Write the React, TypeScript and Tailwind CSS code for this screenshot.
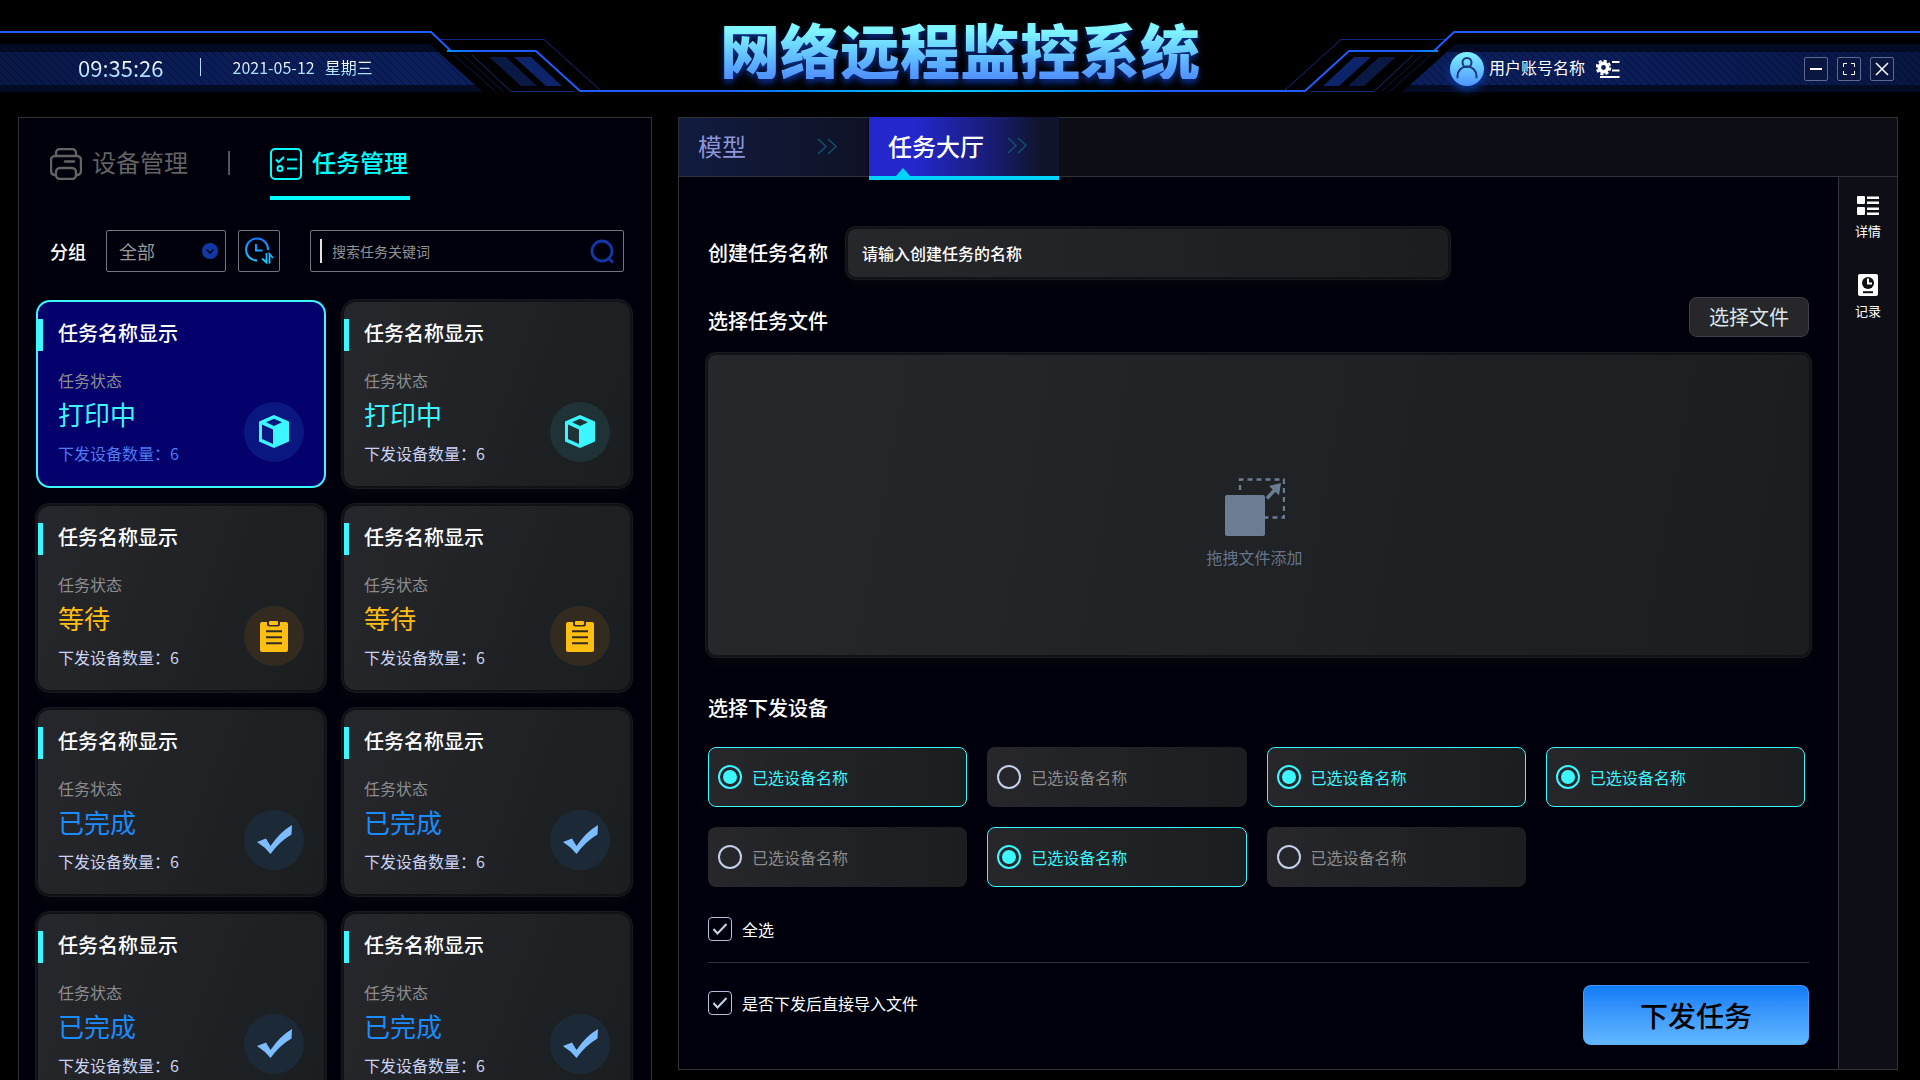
import { useState } from 'react'

type Status = 'printing' | 'waiting' | 'done'

const STATUS_LABEL: Record<Status, string> = {
  printing: '打印中',
  waiting: '等待',
  done: '已完成',
}

const STATUS_TEXT: Record<Status, string> = {
  printing: 'text-[#3cf7ff]',
  waiting: 'text-[#ffbe12]',
  done: 'text-[#1b8cff]',
}

const TASKS: { id: number; status: Status; count: number }[] = [
  { id: 1, status: 'printing', count: 6 },
  { id: 2, status: 'printing', count: 6 },
  { id: 3, status: 'waiting', count: 6 },
  { id: 4, status: 'waiting', count: 6 },
  { id: 5, status: 'done', count: 6 },
  { id: 6, status: 'done', count: 6 },
  { id: 7, status: 'done', count: 6 },
  { id: 8, status: 'done', count: 6 },
]

const PANEL_SHADOW =
  'shadow-[0_0_0_2px_#111215,0_0_0_3px_#191921,0_8px_10px_rgba(10,12,14,0.6)]'

/* HEADER */

function HeaderWing({ mirrored }: { mirrored?: boolean }) {
  const id = mirrored ? 'right' : 'left'
  return (
    <svg
      width={mirrored ? 655 : 620}
      height="93"
      viewBox={mirrored ? '0 0 655 93' : '0 0 620 93'}
      fill="none"
      className={mirrored ? 'absolute top-0 right-0' : 'absolute top-0 left-0'}
      aria-hidden="true"
    >
      <defs>
        <pattern
          id={`hatch-${id}`}
          width="8"
          height="8"
          patternUnits="userSpaceOnUse"
        >
          <path
            d={mirrored ? 'M-2 2L2-2M0 8L8 0M6 10L10 6' : 'M-2 6L2 10M0 0L8 8M6-2L10 2'}
            stroke="#01040f"
            strokeOpacity="0.45"
          />
        </pattern>
        <linearGradient id={`bar-${id}`} x1="-35" x2="483" y1="0" y2="0" gradientUnits="userSpaceOnUse">
          <stop stopColor="#081642" />
          <stop offset="0.4" stopColor="#0a1c56" />
          <stop offset="1" stopColor="#0b1f5c" />
        </linearGradient>
        <linearGradient id={`glint-${id}`} x1="447" x2="480" y1="0" y2="0" gradientUnits="userSpaceOnUse">
          <stop stopColor="#0090ff" />
          <stop offset="1" stopColor="#1f5bff" />
        </linearGradient>
      </defs>
      <g transform={mirrored ? 'translate(620 0) scale(-1 1)' : undefined}>
        <path d="M-35 44H430L483 92H-35Z" fill="#040b24" />
        <path d="M-35 52H438L475 85H-35Z" fill={`url(#bar-${id})`} />
        <path d="M-35 44H430L483 92H-35Z" fill={`url(#hatch-${id})`} />
        <path d="M440 39.500H544L600 90" stroke="#102a80" />
        <path d="M454 55L495 91M463 55L503 91" stroke="#0a1a4a" />
        <path d="M472 55L511 91.500H574" stroke="#14307f" />
        <path d="M489 57H506L537 86H521Z" fill="#0a1844" />
        <path d="M514 57H531L562 86H546Z" fill="#0d246a" />
        <path d="M-35 32H431L451 51H536L580 91H620" stroke="#1f5bff" strokeWidth="2" />
        <path d="M447 51H480" stroke={`url(#glint-${id})`} strokeWidth="2" />
      </g>
    </svg>
  )
}

function AvatarIcon() {
  return (
    <svg width="34" height="34" viewBox="0 0 34 34" fill="none" className="drop-shadow-[0_4px_4px_#0b3a9c]" aria-hidden="true">
      <defs>
        <linearGradient id="avatar" x1="0" x2="0" y1="0" y2="34" gradientUnits="userSpaceOnUse">
          <stop stopColor="#7df3ff" />
          <stop offset="1" stopColor="#4f93ff" />
        </linearGradient>
      </defs>
      <circle cx="17" cy="17" r="17" fill="url(#avatar)" />
      <circle cx="17" cy="10.500" r="4.500" stroke="#17397c" strokeWidth="2" />
      <path d="M7.500 25.500V24a9.500 9.500 0 0 1 19 0v1.500" stroke="#17397c" strokeWidth="2" strokeLinecap="round" />
    </svg>
  )
}

function AccountSettingsIcon() {
  return (
    <svg width="24" height="20" viewBox="0 0 24 20" fill="none" stroke="#fff" aria-hidden="true">
      <circle cx="7.500" cy="8.500" r="4.200" strokeWidth="3.600" />
      <circle cx="7.500" cy="8.500" r="6.800" strokeWidth="2" strokeDasharray="3.200 2.140" />
      <path d="M16 3h7.500M16 11.500h7.500M4 18h19.500" strokeWidth="2" />
    </svg>
  )
}

const windowButton =
  'flex size-6 items-center justify-center rounded-xs border border-[#5c6a92] bg-[#0a1540]'

function Header() {
  return (
    <header className="relative grid h-[93px] shrink-0 grid-cols-[1fr_auto_1fr] items-start">
      <HeaderWing />
      <HeaderWing mirrored />
      <div className="absolute top-[90px] right-[655px] left-[620px] h-0.5 bg-linear-to-r from-[#1f5bff] from-15% via-[#00d0ff] via-50% to-[#1f5bff] to-85%" />

      <div className="relative mt-[50px] flex h-[34px] items-center pl-[78px]">
        <time className="bg-linear-to-b from-white from-30% to-[#7fd0ff] bg-clip-text text-[22px] leading-[34px] text-transparent">
          09:35:26
        </time>
        <span className="ml-9 h-[18px] w-px bg-[#b5dcff]" />
        <p className="ml-8 flex gap-[10px] bg-linear-to-b from-white from-30% to-[#7fd0ff] bg-clip-text text-base text-transparent">
          <span>2021-05-12</span>
          <span>星期三</span>
        </p>
      </div>

      <h1 className="relative mt-[19px] bg-linear-to-b from-[#7ff6ff] from-20% to-[#5294ff] to-95% bg-clip-text text-[60px] leading-[60px] font-black text-transparent drop-shadow-[0_4px_3px_#0a2f8f]">
        网络远程监控系统
      </h1>

      <div className="relative mt-[52px] flex h-[34px] items-center justify-end gap-[184px] pr-[26px]">
        <button type="button" className="flex items-center text-base text-white">
          <AvatarIcon />
          <span className="ml-[5px] mr-[11px] pb-1">用户账号名称</span>
          <AccountSettingsIcon />
        </button>
        <div className="flex gap-[9px]">
          <button type="button" aria-label="最小化" className={windowButton}>
            <svg width="14" height="14" viewBox="0 0 14 14" stroke="#fff" strokeWidth="2" fill="none">
              <path d="M1 7h12" />
            </svg>
          </button>
          <button type="button" aria-label="全屏" className={windowButton}>
            <svg width="14" height="14" viewBox="0 0 14 14" stroke="#fff" fill="none">
              <path d="M1.500 5V1.500H5M9 1.500h3.500V5M12.500 9v3.500H9M5 12.500H1.500V9" />
            </svg>
          </button>
          <button type="button" aria-label="关闭" className={windowButton}>
            <svg width="14" height="14" viewBox="0 0 14 14" stroke="#fff" strokeWidth="1.500" fill="none">
              <path d="M1 1l12 12M13 1L1 13" />
            </svg>
          </button>
        </div>
      </div>
    </header>
  )
}

/* LEFT PANEL */

function PrinterIcon() {
  return (
    <svg width="32" height="32" viewBox="0 0 32 32" fill="none" stroke="currentColor" strokeWidth="2.400" aria-hidden="true">
      <path d="M6 8V5a4 4 0 0 1 4-4h12a4 4 0 0 1 4 4v3" />
      <path d="M6 27H5a4 4 0 0 1-4-4V12a4 4 0 0 1 4-4h22a4 4 0 0 1 4 4v11a4 4 0 0 1-4 4h-1" />
      <rect x="6" y="20" width="20" height="11" rx="4" />
      <path d="M15 13.500h9" strokeLinecap="round" />
    </svg>
  )
}

function TaskListIcon() {
  return (
    <svg width="32" height="32" viewBox="0 0 32 32" fill="none" stroke="currentColor" strokeWidth="2" aria-hidden="true">
      <rect x="1" y="1" width="30" height="30" rx="4" />
      <path d="M6 11.500l2.500 2.500L14 9M17 11.500h10M17 20.500h10" />
      <circle cx="10" cy="20.500" r="2.500" />
    </svg>
  )
}

function ClockSortIcon() {
  return (
    <svg width="30" height="28" viewBox="0 0 30 28" fill="none" stroke="url(#clock)" strokeWidth="2" aria-hidden="true">
      <defs>
        <linearGradient id="clock" x1="0" x2="0" y1="0" y2="28" gradientUnits="userSpaceOnUse">
          <stop stopColor="#0f78ff" />
          <stop offset="1" stopColor="#22d8ff" />
        </linearGradient>
      </defs>
      <path d="M13 23.500A11 11 0 1 1 24 13" />
      <path d="M12 7v6.500h6.500" />
      <path d="M22.500 16v9.500l-4.500-4M25.500 26.500v-9.500l3.500 4" strokeWidth="1.800" />
    </svg>
  )
}

function StatusIcon({ status, active }: { status: Status; active: boolean }) {
  if (status === 'printing') {
    return (
      <svg width="60" height="60" viewBox="0 0 60 60" aria-hidden="true">
        <circle cx="30" cy="30" r="30" fill={active ? '#0b1780' : '#1f3337'} />
        <path
          fillRule="evenodd"
          fill="#3cf7ff"
          d="M30 13L45 19.500V39.500L30 46L15 39.500V19.500ZM30 16.800L22 20.300L30 24L38 20.300ZM18 22.500V37L29 42V27.500Z"
        />
      </svg>
    )
  }
  if (status === 'waiting') {
    return (
      <svg width="60" height="60" viewBox="0 0 60 60" aria-hidden="true">
        <circle cx="30" cy="30" r="30" fill="#332b20" />
        <path
          fill="#ffbe12"
          d="M18 16H23V18.500A2 2 0 0 0 25 20.500H34A2 2 0 0 0 36 18.500V16H42A2 2 0 0 1 44 18V44A2 2 0 0 1 42 46H18A2 2 0 0 1 16 44V18A2 2 0 0 1 18 16Z"
        />
        <rect x="25" y="15" width="9" height="4" rx="1" fill="#ffbe12" />
        <path d="M22 25.200H38M22 31.200H38M22 37.200H38" stroke="#332b20" strokeWidth="2" />
      </svg>
    )
  }
  return (
    <svg width="60" height="60" viewBox="0 0 60 60" aria-hidden="true">
      <circle cx="30" cy="30" r="30" fill="#1c2a38" />
      <path d="M13 32L22 28.500L26.500 36Q36 22 48 15L47.500 24.500Q36 31 26.500 44Q21 37 13 32Z" fill="#7dbdff" />
    </svg>
  )
}

function TaskCard({
  status,
  count,
  active,
  onSelect,
}: {
  status: Status
  count: number
  active: boolean
  onSelect: () => void
}) {
  return (
    <button
      type="button"
      onClick={onSelect}
      className={`relative flex items-end justify-between rounded-xl px-5 pt-[17px] pb-5 text-left ${
        active
          ? 'bg-[#04006c] shadow-[0_0_0_2px_#3cf7ff]'
          : `bg-linear-110 from-[#26272c] to-[#1a1e1f] ${PANEL_SHADOW}`
      }`}
    >
      <span className="absolute top-[17px] left-0 h-8 w-[5px] bg-[#3cf7ff]" />
      <span className="flex flex-col">
        <span className="text-xl leading-7 font-medium text-white">任务名称显示</span>
        <span className="mt-[21px] text-base leading-6 text-[#8c8c8c]">任务状态</span>
        <span className={`mt-[5px] text-[26px] leading-[34px] ${STATUS_TEXT[status]}`}>
          {STATUS_LABEL[status]}
        </span>
        <span className={`mt-[10px] mb-px text-base leading-6 ${active ? 'text-[#4f7cf0]' : 'text-[#ccd3f2]'}`}>
          下发设备数量：{count}
        </span>
      </span>
      <span className="mb-1">
        <StatusIcon status={status} active={active} />
      </span>
    </button>
  )
}

function TaskPanel() {
  const [selected, setSelected] = useState(1)

  return (
    <section className="min-h-0 overflow-hidden border border-b-0 border-[#333335] bg-[#00000c]">
      <nav className="flex items-start gap-10 px-[31px] pt-[30px]">
        <button type="button" className="flex h-8 items-start gap-[10px] text-2xl text-[#636363]">
          <PrinterIcon />
          <span className="leading-7">设备管理</span>
        </button>
        <span className="mt-[3px] h-6 w-0.5 bg-[#555]" />
        <button
          type="button"
          className="flex h-[52px] items-start gap-[10px] border-b-4 border-[#00ffff] pr-0.5 text-2xl font-medium text-[#00ffff]"
        >
          <TaskListIcon />
          <span className="leading-7">任务管理</span>
        </button>
      </nav>

      <div className="mt-[30px] flex h-[42px] items-center pr-[27px] pl-[31px]">
        <label htmlFor="group" className="text-lg font-medium text-white">
          分组
        </label>
        <div className="relative ml-5 h-full w-[120px]">
          <select
            id="group"
            className="size-full appearance-none rounded-xs border border-[#74747e] bg-transparent pl-3 text-lg text-[#999]"
          >
            <option>全部</option>
          </select>
          <svg width="16" height="16" viewBox="0 0 16 16" fill="none" className="pointer-events-none absolute top-[13px] right-2" aria-hidden="true">
            <circle cx="8" cy="8" r="8" fill="#1138a4" />
            <path d="M4.500 6.500L8 10l3.500-3.500" stroke="#00000c" strokeWidth="1.500" />
          </svg>
        </div>
        <button
          type="button"
          aria-label="按时间排序"
          className="ml-3 flex h-full w-[42px] items-center justify-center rounded-xs border border-[#74747e]"
        >
          <ClockSortIcon />
        </button>
        <div className="ml-[30px] flex h-full flex-1 items-center rounded-xs border border-[#74747e] pr-2 pl-[9px]">
          <span className="h-6 w-0.5 bg-[#e4e4dc]" />
          <input
            type="search"
            aria-label="搜索任务关键词"
            placeholder="搜索任务关键词"
            className="h-full min-w-0 flex-1 bg-transparent pl-[10px] text-sm text-white outline-none placeholder:text-[#919191]"
          />
          <svg width="25" height="25" viewBox="0 0 25 25" fill="none" stroke="#1138a4" strokeWidth="2.800" aria-hidden="true">
            <circle cx="12" cy="12" r="10" />
            <path d="M18 19l5 4.500" />
          </svg>
        </div>
      </div>

      <div className="mt-[30px] grid grid-cols-2 gap-5 pr-[21px] pl-[19px]">
        {TASKS.map((task) => (
          <TaskCard
            key={task.id}
            status={task.status}
            count={task.count}
            active={task.id === selected}
            onSelect={() => setSelected(task.id)}
          />
        ))}
      </div>
    </section>
  )
}

/* RIGHT PANEL */

function DoubleChevron() {
  return (
    <svg width="20" height="17" viewBox="0 0 20 17" fill="none" stroke="#0f5470" strokeWidth="1.400" aria-hidden="true">
      <path d="M1 1l8 7.500L1 16M11 1l8 7.500L11 16" />
    </svg>
  )
}

function DragIcon() {
  return (
    <svg width="60" height="58" viewBox="0 0 60 58" fill="none" aria-hidden="true">
      <path
        d="M15 13V1.500H59V39.500H40"
        stroke="#6c7c93"
        strokeWidth="2.400"
        strokeDasharray="5 4"
        strokeDashoffset="-1"
      />
      <rect x="0" y="17" width="40" height="41" rx="2" fill="#6c7c93" />
      <path d="M42 20.500L51 10.500" stroke="#6c7c93" strokeWidth="3.500" />
      <path d="M44 8L56 5L54 17.500Z" fill="#6c7c93" />
    </svg>
  )
}

function Tabs() {
  return (
    <nav className="flex h-[59px] shrink-0 border-b border-[#333335] bg-[#0d0d16]">
      <button
        type="button"
        className="mr-0.5 flex w-[188px] items-center justify-between bg-linear-to-r from-[#101b3e] to-[#0f1226] pr-[30px] pb-0.5 pl-[19px] text-2xl text-[#8c94d8]"
      >
        模型
        <DoubleChevron />
      </button>
      <button
        type="button"
        className="relative -mt-px flex w-[190px] items-center justify-between bg-linear-to-r from-[#2327cc] from-25% via-[#191c73] via-65% to-[#10132c] to-90% pr-8 pb-0.5 pl-[19px] text-2xl font-medium text-white"
      >
        任务大厅
        <DoubleChevron />
        <svg width="14" height="8" viewBox="0 0 14 8" className="absolute bottom-0 left-[27px]" aria-hidden="true">
          <path d="M7 0L14 8H0Z" fill="#00d5ff" />
        </svg>
        <span className="absolute top-full left-0 h-1 w-full bg-[#00d5ff]" />
      </button>
    </nav>
  )
}

function DeviceOption({ checked, onToggle }: { checked: boolean; onToggle: () => void }) {
  return (
    <label
      className={`flex h-[60px] items-center gap-[10px] rounded-lg border bg-linear-to-r from-[#26262b] to-[#1a1e1f] bg-origin-border pl-[9px] text-base ${
        checked ? 'border-[#3cf7ff] text-[#3cf7ff]' : 'border-transparent text-[#8c8c8c]'
      }`}
    >
      <span className="relative flex size-6 items-center justify-center">
        <input
          type="checkbox"
          checked={checked}
          onChange={onToggle}
          className="peer size-6 appearance-none rounded-full border-2 border-[#c3cfe8] checked:border-[#3cf7ff]"
        />
        <span className="pointer-events-none absolute hidden size-[14px] rounded-full bg-[#3cf7ff] peer-checked:block" />
      </span>
      已选设备名称
    </label>
  )
}

function CheckOption({ label }: { label: string }) {
  const [checked, setChecked] = useState(true)
  return (
    <label className="flex h-6 w-fit items-center gap-[10px] text-base text-white">
      <span className="relative size-6">
        <input
          type="checkbox"
          checked={checked}
          onChange={() => setChecked(!checked)}
          className="peer block size-6 appearance-none rounded-sm border border-[#b4c0d8]"
        />
        <svg
          width="24"
          height="24"
          viewBox="0 0 24 24"
          fill="none"
          className="pointer-events-none absolute inset-0 hidden peer-checked:block"
          aria-hidden="true"
        >
          <path d="M5.500 12l4 4.500L18.500 7" stroke="#c8d4ea" strokeWidth="2" />
        </svg>
      </span>
      {label}
    </label>
  )
}

function TaskForm() {
  const [devices, setDevices] = useState([true, false, true, true, false, true, false])

  function toggle(index: number) {
    setDevices((list) => list.map((on, i) => (i === index ? !on : on)))
  }

  return (
    <form className="flex-1 px-[29px] pt-[52px]" onSubmit={(e) => e.preventDefault()}>
      <div className="flex items-center gap-5">
        <label htmlFor="task-name" className="text-xl font-medium text-white">
          创建任务名称
        </label>
        <input
          id="task-name"
          type="text"
          placeholder="请输入创建任务的名称"
          className={`h-12 max-w-[600px] flex-1 rounded-lg bg-linear-to-r from-[#26272b] to-[#1a1e1f] px-[14px] text-base font-medium text-white outline-none placeholder:text-white ${PANEL_SHADOW}`}
        />
      </div>

      <div className="mt-5 flex items-end justify-between">
        <h2 className="text-xl leading-8 font-medium text-white">选择任务文件</h2>
        <button
          type="button"
          className="h-10 w-[120px] rounded-lg border border-[#404045] bg-[#26262b] text-xl text-[#dbe7ea]"
        >
          选择文件
        </button>
      </div>

      <div
        className={`mt-[18px] flex h-[300px] flex-col items-center justify-center rounded-lg bg-linear-100 from-[#26272b] to-[#1a1e1f] pt-9 pr-2 ${PANEL_SHADOW}`}
      >
        <DragIcon />
        <p className="mt-[9px] text-base leading-6 text-[#64748a]">拖拽文件添加</p>
      </div>

      <h2 className="mt-[37px] text-xl leading-8 font-medium text-white">选择下发设备</h2>
      <div className="mt-[23px] grid grid-cols-4 gap-5 pr-1">
        {devices.map((on, i) => (
          <DeviceOption key={i} checked={on} onToggle={() => toggle(i)} />
        ))}
      </div>

      <div className="mt-[30px] border-b border-[#333335] pb-[21px]">
        <CheckOption label="全选" />
      </div>

      <div className="mt-[22px] flex items-start justify-between">
        <div className="pt-1.5">
          <CheckOption label="是否下发后直接导入文件" />
        </div>
        <button
          type="submit"
          className="h-[60px] w-[226px] rounded-lg border border-[#5aa9ff]/60 bg-linear-to-b from-[#0d7af8] to-[#63b8ff] bg-origin-border text-[28px] font-medium text-black"
        >
          下发任务
        </button>
      </div>
    </form>
  )
}

function SideBar() {
  return (
    <aside className="flex w-[59px] shrink-0 flex-col items-center border-l border-[#333335] bg-[#0e0e17] pt-[19px] text-[13px] leading-5 text-white">
      <button type="button" className="flex flex-col items-center">
        <svg width="22" height="20" viewBox="0 0 22 20" fill="#fff" aria-hidden="true">
          <rect x="0" y="0" width="8" height="8" rx="1" />
          <rect x="0" y="11" width="8" height="8" rx="1" />
          <path d="M10 .5h12v2.500H10zM10 5.500h12v2.500H10zM10 11.500h12v2.500H10zM10 16.500h12V19H10z" />
        </svg>
        <span className="mt-[5px]">详情</span>
      </button>
      <button type="button" className="mt-[33px] flex flex-col items-center">
        <svg width="20" height="22" viewBox="0 0 20 22" fill="none" aria-hidden="true">
          <rect width="20" height="22" rx="2" fill="#fff" />
          <circle cx="10" cy="9" r="6" fill="#0e0e17" />
          <path d="M10 4.500V9.500h4" stroke="#fff" strokeWidth="2" />
          <path d="M5 18.200h10" stroke="#0e0e17" strokeWidth="2" />
        </svg>
        <span className="mt-[5px]">记录</span>
      </button>
    </aside>
  )
}

export default function App() {
  return (
    <div className="flex h-screen flex-col overflow-hidden bg-black font-['Noto_Sans_CJK_SC',sans-serif]">
      <Header />
      <main className="grid min-h-0 flex-1 grid-cols-[634fr_1220fr] gap-[26px] pt-6 pr-[22px] pl-[18px]">
        <TaskPanel />
        <section className="mb-[10px] flex flex-col border border-[#333335] bg-[#00000c]">
          <Tabs />
          <div className="flex flex-1">
            <TaskForm />
            <SideBar />
          </div>
        </section>
      </main>
    </div>
  )
}
